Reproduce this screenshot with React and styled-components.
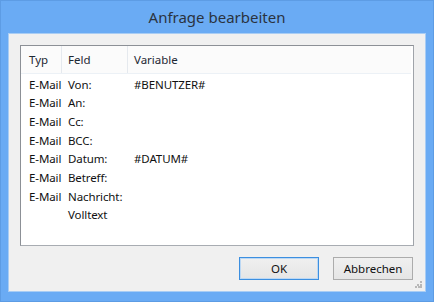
import React from "react";
import styled, { createGlobalStyle } from "styled-components";

const rows = [
  { typ: "E-Mail", feld: "Von:", variable: "#BENUTZER#" },
  { typ: "E-Mail", feld: "An:", variable: "" },
  { typ: "E-Mail", feld: "Cc:", variable: "" },
  { typ: "E-Mail", feld: "BCC:", variable: "" },
  { typ: "E-Mail", feld: "Datum:", variable: "#DATUM#" },
  { typ: "E-Mail", feld: "Betreff:", variable: "" },
  { typ: "E-Mail", feld: "Nachricht:", variable: "" },
  { typ: "", feld: "Volltext", variable: "" },
];

const App = () => {
  return (
    <>
      <GlobalStyle />
      <Window>
        <TitleBar>Anfrage bearbeiten</TitleBar>
        <Client>
          <ListBox>
            <HeaderRow>
              <HeaderCell $w={41}>Typ</HeaderCell>
              <HeaderCell $w={66}>Feld</HeaderCell>
              <HeaderCell $last>Variable</HeaderCell>
            </HeaderRow>
            <Rows>
              {rows.map((r, i) => (
                <Row key={i}>
                  <Cell $w={41}>{r.typ}</Cell>
                  <Cell $w={66}>{r.feld}</Cell>
                  <Cell>{r.variable}</Cell>
                </Row>
              ))}
            </Rows>
          </ListBox>
          <Footer>
            <Button $default>OK</Button>
            <Button>Abbrechen</Button>
          </Footer>
          <Grip>
            <svg width="7" height="7" viewBox="0 0 7 7">
              <rect x="5" y="0" width="2" height="2" fill="#b8b8b8" />
              <rect x="2" y="3" width="2" height="2" fill="#b8b8b8" />
              <rect x="5" y="3" width="2" height="2" fill="#b8b8b8" />
              <rect x="0" y="5" width="2" height="2" fill="#b8b8b8" />
              <rect x="3" y="5" width="2" height="2" fill="#b8b8b8" />
              <rect x="5" y="5" width="2" height="2" fill="#b8b8b8" />
            </svg>
          </Grip>
        </Client>
      </Window>
    </>
  );
};

export default App;

const GlobalStyle = createGlobalStyle`
  html, body {
    margin: 0;
    padding: 0;
    background: #ffffff;
  }
  body {
    font-family: "Noto Sans", "Open Sans", sans-serif;
  }
`;

const Window = styled.div`
  box-sizing: border-box;
  width: 434px;
  height: 302px;
  background: #6aabf4;
  border: 1px solid #5d9ce4;
  padding: 0 7px 9px 7px;
  display: flex;
  flex-direction: column;
`;

const TitleBar = styled.div`
  height: 32px;
  display: flex;
  align-items: center;
  justify-content: center;
  font-size: 15px;
  color: #2a3340;
  padding-bottom: 1px;
  box-sizing: border-box;
`;

const Client = styled.div`
  position: relative;
  flex: 1;
  background: #f0f0f0;
  border: 1px solid #a9cdf4;
  box-sizing: border-box;
  padding: 11px 11px 0 11px;
  display: flex;
  flex-direction: column;
`;

const ListBox = styled.div`
  height: 201px;
  box-sizing: border-box;
  background: #ffffff;
  border: 1px solid #8c9096;
  border-right-color: #a0a4aa;
  border-bottom-color: #a8acb2;
  display: flex;
  flex-direction: column;
  padding-right: 2px;
`;

const HeaderRow = styled.div`
  display: flex;
  height: 27px;
  background: #fbfbfb;
  border-bottom: 1px solid #ecf1f6;
`;

const HeaderCell = styled.div`
  box-sizing: border-box;
  width: ${(p) => (p.$w ? `${p.$w}px` : "auto")};
  flex: ${(p) => (p.$last ? 1 : "none")};
  padding-left: ${(p) => (p.$w === 41 ? 8 : 6)}px;
  display: flex;
  align-items: center;
  font-size: 11.5px;
  color: #1e2833;
  border-right: ${(p) => (p.$last ? "none" : "1px solid #e5e9ee")};
`;

const Rows = styled.div`
  padding-top: 1px;
  display: flex;
  flex-direction: column;
`;

const Row = styled.div`
  display: flex;
  height: 18.67px;
  align-items: center;
`;

const Cell = styled.div`
  box-sizing: border-box;
  width: ${(p) => (p.$w ? `${p.$w}px` : "auto")};
  flex: ${(p) => (p.$w ? "none" : 1)};
  padding-left: ${(p) => (p.$w === 41 ? 8 : 6)}px;
  font-size: 11.5px;
  letter-spacing: -0.1px;
  color: #111111;
  white-space: nowrap;
`;

const Footer = styled.div`
  display: flex;
  justify-content: flex-end;
  gap: 14px;
  margin-top: 11px;
  padding-right: 1px;
`;

const Button = styled.button`
  box-sizing: border-box;
  width: 80px;
  height: 23px;
  margin: 0;
  padding: 0;
  font-family: "Noto Sans", "Open Sans", sans-serif;
  font-size: 11.5px;
  color: #111111;
  background: linear-gradient(#f0f0f0, #e5e5e5);
  border: 1px solid ${(p) => (p.$default ? "#3c8fe0" : "#acacac")};
  box-shadow: ${(p) => (p.$default ? "inset 0 0 0 1px #bcd8f4" : "none")};
  border-radius: 0;
`;

const Grip = styled.div`
  position: absolute;
  right: 3px;
  bottom: 3px;
  width: 7px;
  height: 7px;
  display: flex;
`;
